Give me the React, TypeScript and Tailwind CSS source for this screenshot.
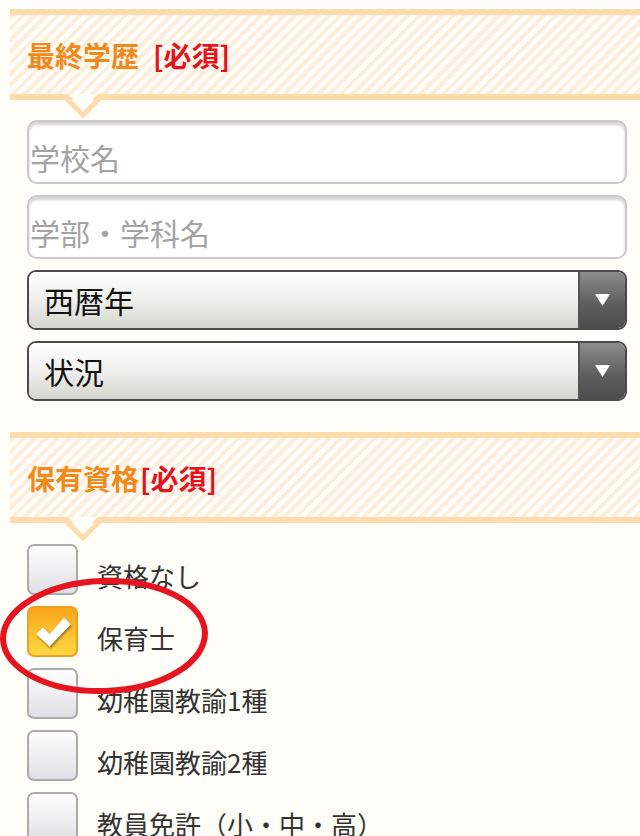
import React from 'react';

const FONT = "font-['Hiragino_Sans','Noto_Sans_CJK_JP',sans-serif]";

const qualifications = [
  { label: '資格なし', checked: false },
  { label: '保育士', checked: true },
  { label: '幼稚園教諭1種', checked: false },
  { label: '幼稚園教諭2種', checked: false },
  { label: '教員免許（小・中・高）', checked: false },
];

function SectionHeader({ title, spaced }: { title: string; spaced?: boolean }) {
  return (
    <div className="relative ml-[10px]">
      <div className="h-[91px] border-y-[6px] border-[#fddcab] bg-[repeating-linear-gradient(135deg,#fdeedb_0_4px,#fffefa_4px_8px)] flex items-center pl-[17px]">
        <h2 className="text-[28px] font-bold leading-none text-[#f18a1c] whitespace-nowrap">
          {title}
          <span className={spaced ? 'ml-[14px] text-[#e4141e]' : 'ml-[1px] text-[#e4141e]'}>[必須]</span>
        </h2>
      </div>
      <svg className="absolute left-[55px] top-[85px] overflow-visible" width="36" height="24" viewBox="0 0 36 24">
        <polygon points="3,0 33,0 18,15" fill="#fffdf7" />
        <polyline points="0,3 18,21 36,3" fill="none" stroke="#fddcab" strokeWidth="5" />
      </svg>
    </div>
  );
}

function TextField({ placeholder }: { placeholder: string }) {
  return (
    <input
      readOnly
      placeholder={placeholder}
      className="w-full h-[64px] rounded-[10px] border-2 border-[#c9c9c9] bg-white shadow-[inset_0_3px_3px_rgba(0,0,0,0.18)] pl-[1px] pt-[10px] text-[30px] leading-none outline-none placeholder:text-[#a3a3a3]"
    />
  );
}

function SelectBox({ value }: { value: string }) {
  return (
    <div className="flex h-[60px] rounded-[9px] border-2 border-[#4a4a4a] overflow-hidden">
      <div className="flex-1 flex items-center pl-[15px] bg-[linear-gradient(#ffffff,#f1f1ee_45%,#d6d6d0)] text-[30px] leading-none text-[#111]">
        {value}
      </div>
      <div className="w-[47px] flex items-center justify-center border-l-2 border-[#555] bg-[linear-gradient(#8c8c8c,#5c5c5c_60%,#4c4c4c)]">
        <svg width="15" height="12" viewBox="0 0 15 12">
          <polygon points="0,0 15,0 7.5,12" fill="#fff" />
        </svg>
      </div>
    </div>
  );
}

function CheckBox({ checked }: { checked: boolean }) {
  if (checked) {
    return (
      <div className="w-[51px] h-[51px] shrink-0 rounded-[7px] border-2 border-[#f0a021] bg-[linear-gradient(#f9a51a,#fcc532_60%,#fdd63f)] flex items-center justify-center">
        <svg width="38" height="34" viewBox="0 0 34 30" className="drop-shadow-[1px_2px_1px_rgba(90,50,0,0.55)]">
          <path d="M2 17 L8 11 L14 17 L27 2 L33 8 L14 28 Z" fill="#fff" />
        </svg>
      </div>
    );
  }
  return (
    <div className="w-[51px] h-[51px] shrink-0 rounded-[7px] border-2 border-[#ababab] bg-[linear-gradient(#fdfdfd,#ececee_60%,#e0e0e4)]" />
  );
}

export default function App() {
  return (
    <div className={`${FONT} w-[640px] h-[836px] overflow-hidden bg-[#fffdf7] pt-[9px]`}>
      <SectionHeader title="最終学歴" spaced />

      <div className="flex flex-col gap-[11px] pl-[27px] pr-[13px] pt-[20px]">
        <TextField placeholder="学校名" />
        <TextField placeholder="学部・学科名" />
        <SelectBox value="西暦年" />
        <SelectBox value="状況" />
      </div>

      <div className="h-[31px]" />
      <SectionHeader title="保有資格" />

      <div className="relative pl-[27px] pt-[21px]">
        {qualifications.map((q) => (
          <div key={q.label} className="flex h-[62px] items-start">
            <CheckBox checked={q.checked} />
            <span className="ml-[19px] mt-[19px] text-[26px] leading-[26px] text-[#333] whitespace-nowrap">
              {q.label}
            </span>
          </div>
        ))}
        <svg className="absolute left-0 top-[50px] pointer-events-none" width="220" height="130" viewBox="0 0 220 130">
          <ellipse cx="104" cy="63" rx="101" ry="55" fill="none" stroke="#e5141f" strokeWidth="6" transform="rotate(-2 104 63)" />
        </svg>
      </div>
    </div>
  );
}
